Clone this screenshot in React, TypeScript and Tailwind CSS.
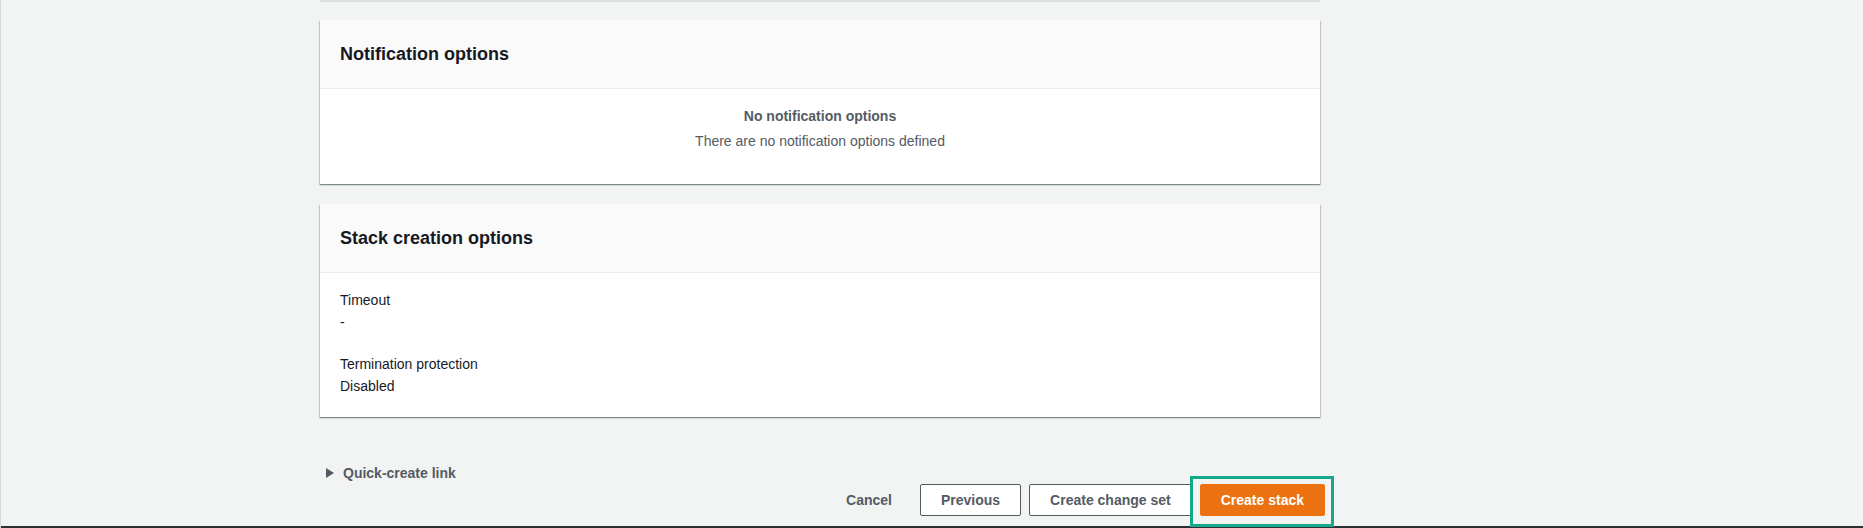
import React from 'react';

const cardShadow =
    'shadow-[0_1px_1px_0_rgba(0,28,36,0.3),1px_1px_1px_0_rgba(0,28,36,0.15),-1px_1px_1px_0_rgba(0,28,36,0.15)]';

const Card: React.FC<{ title: string; children: React.ReactNode }> = ({ title, children }) => (
    <div className={`w-[1000px] bg-white ${cardShadow}`}>
        <div className="h-[69px] flex items-center px-5 bg-[#fafafa] border-b border-[#eaeded]">
            <h2 className="text-[18px] font-bold text-[#16191f] leading-[22px]">{title}</h2>
        </div>
        {children}
    </div>
);

const Field: React.FC<{ label: string; value: string }> = ({ label, value }) => (
    <div className="text-[14px] leading-[22px] text-[#16191f]">
        <div>{label}</div>
        <div>{value}</div>
    </div>
);

export default function App() {
    return (
        <div className="w-full h-[528px] bg-[#f2f3f3] border-l border-[#d5dbdb] flex flex-col font-['Liberation_Sans',Arial,sans-serif] overflow-hidden">
            <div className="ml-[319px] w-[1000px] flex flex-col flex-1">
                {/* bottom edge of the previous panel */}
                <div className="h-[2px] bg-[#dde0e0]" />

                <div className="mt-[18px]">
                    <Card title="Notification options">
                        <div className="pt-4 pb-8 flex flex-col items-center text-[14px] leading-[22px] text-[#545b64]">
                            <div className="font-bold">No notification options</div>
                            <div className="mt-[3px]">There are no notification options defined</div>
                        </div>
                    </Card>
                </div>

                <div className="mt-5">
                    <Card title="Stack creation options">
                        <div className="px-5 pt-4 pb-5 flex flex-col gap-5">
                            <Field label="Timeout" value="-" />
                            <Field label="Termination protection" value="Disabled" />
                        </div>
                    </Card>
                </div>

                <div className="mt-[45px] h-[22px] flex items-center gap-[9px] pl-[6px] text-[14px] font-bold text-[#545b64]">
                    <svg width="8" height="10" viewBox="0 0 8 10">
                        <polygon points="0,0 8,5 0,10" fill="#545b64" />
                    </svg>
                    <span>Quick-create link</span>
                </div>

                <div className="flex justify-end items-center gap-2 mr-[-5px] h-8">
                    <button className="h-8 px-5 text-[14px] font-bold text-[#545b64]">Cancel</button>
                    <button className="h-8 px-5 rounded-[2px] border border-[#545b64] bg-white text-[14px] font-bold text-[#545b64]">
                        Previous
                    </button>
                    <button className="h-8 px-5 rounded-[2px] border border-[#545b64] bg-white text-[14px] font-bold text-[#545b64]">
                        Create change set
                    </button>
                    <div className="relative z-10">
                        <button className="h-8 px-5 rounded-[2px] bg-[#ec7211] border border-[#ec7211] text-[14px] font-bold text-white">
                            Create stack
                        </button>
                        <div className="absolute -left-[10px] -right-[9px] -top-[8px] -bottom-[11px] border-[3px] border-[#14a98b] pointer-events-none" />
                    </div>
                </div>
            </div>
            <div className="h-[2px] bg-[#2b3035] shrink-0" />
        </div>
    );
}
